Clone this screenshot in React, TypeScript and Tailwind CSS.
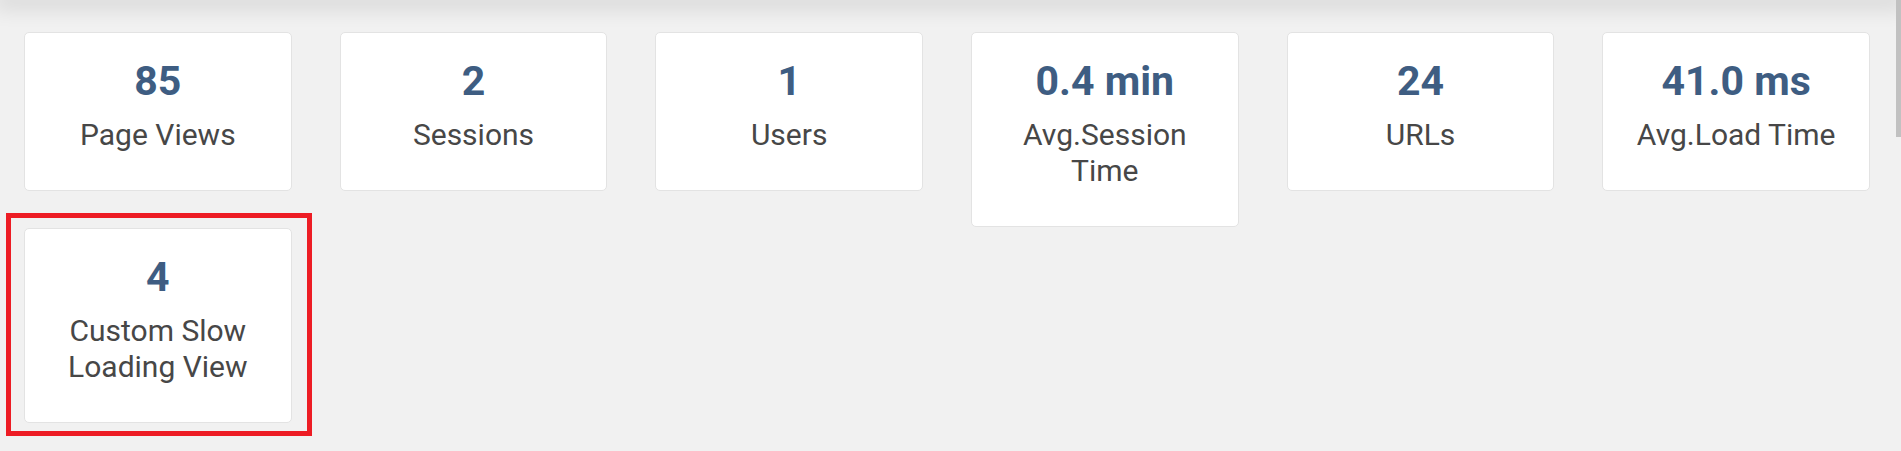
const stats = [
  { value: "85", label: "Page Views" },
  { value: "2", label: "Sessions" },
  { value: "1", label: "Users" },
  { value: "0.4 min", label: "Avg.Session Time" },
  { value: "24", label: "URLs" },
  { value: "41.0 ms", label: "Avg.Load Time" },
  { value: "4", label: "Custom Slow Loading View", highlight: true },
];

function StatCard({ value, label }: { value: string; label: string }) {
  return (
    <div className="w-full rounded-[5px] border border-[#e3e3e3] bg-white px-4 pt-6 pb-[37px] text-center">
      <div className="text-[41px] font-bold leading-[48px] text-[#3e5d82]">{value}</div>
      <div className="mt-3 text-[30px] leading-[36px] text-[#474747]">{label}</div>
    </div>
  );
}

export default function App() {
  return (
    <div
      className="relative h-[451px] w-full overflow-hidden bg-[#f1f1f1]"
      style={{ fontFamily: "Roboto, 'Liberation Sans', sans-serif" }}
    >
      {/* header shadow */}
      <div className="h-0 shadow-[0_0_22px_6px_rgba(0,0,0,0.16)]" />

      <div className="grid w-[1894px] grid-cols-6 items-start gap-y-px pt-8">
        {stats.map((s) => (
          <div key={s.label} className="relative px-6">
            {s.highlight && (
              <div className="pointer-events-none absolute top-[-15px] right-[4px] bottom-[-13px] left-[6px] border-[5px] border-[#ed1c24]" />
            )}
            <StatCard value={s.value} label={s.label} />
          </div>
        ))}
      </div>

      {/* scrollbar */}
      <div className="absolute top-0 right-0 h-full w-[5px] bg-[#f1f1f1]">
        <div className="h-[137px] w-full bg-[#c1c1c1]" />
      </div>
    </div>
  );
}
